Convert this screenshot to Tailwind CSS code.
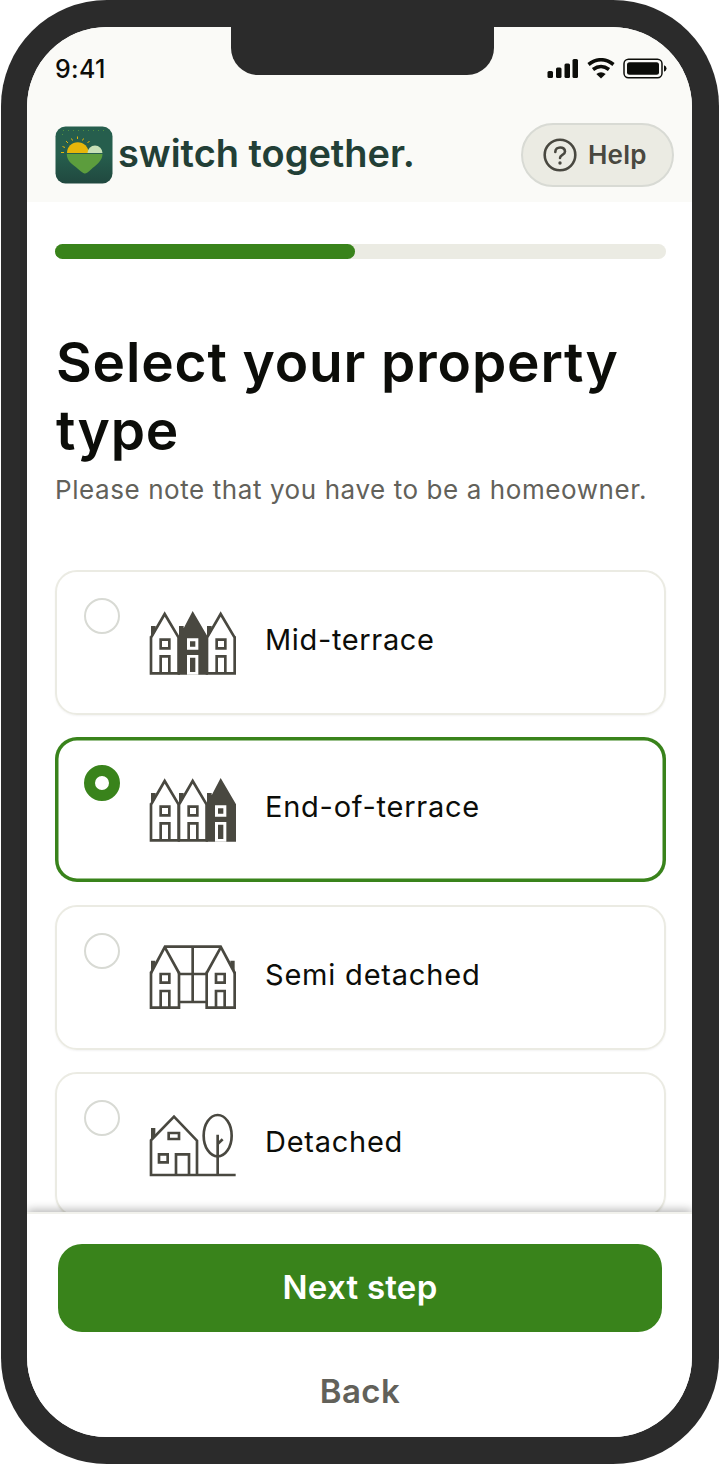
<!DOCTYPE html>
<html lang="en" class="bg-white">

<head>
    <meta charset="utf-8" />
    <script src="https://cdn.jsdelivr.net/npm/@tailwindcss/browser@4"></script>
    <title>Switch Together - Property type</title>
</head>

<body class="w-[720px] h-[1465px] overflow-hidden font-['Inter',sans-serif] text-[#0c0d09]">
    <!-- Shared icon shapes -->
    <svg class="hidden">
        <defs>
            <g id="house" fill="none" stroke="#494840" stroke-width="8">
                <path d="M33 113L74 42L116 113M33 109V220H116V109" />
                <path d="M62 119H88V145H62zM62 220V169H88V220" />
                <path d="M33 78H47V94L33 116z" fill="#494840" stroke="none" />
            </g>
            <g id="house-solid">
                <path d="M29 112L33 110V78H47V85L74 33L120 112V224H29z" fill="#494840" />
                <path d="M57 115H91V149H57zM57 165H91V224H57z" fill="#fff" />
                <path d="M66 124H82V140H66zM66 173H82V216H66z" fill="#494840" />
            </g>
        </defs>
    </svg>

    <div class="w-[718px] h-[1464px] ml-px pl-[26px] pr-[27px] pt-[26.5px] pb-[27px] bg-[#2b2b2b] rounded-[106px]">
        <div class="relative h-full flex flex-col rounded-[80px] overflow-hidden bg-white">
            <!-- Notch -->
            <div class="absolute left-[204px] -top-px w-[262.5px] h-[49.5px] bg-[#2b2b2b] rounded-b-[27px]"></div>

            <!-- Header -->
            <header class="h-[175px] shrink-0 bg-[#fafaf7] pl-7 pr-[18px]">
                <div class="flex justify-between items-center h-[85px] pr-[7px]">
                    <span class="text-[25px] font-medium leading-none tracking-[0.3px]">9:41</span>
                    <svg class="w-[120px] h-[22px]" viewBox="0 0 120 22" fill="#0c0d09">
                        <rect x="0.5" y="13" width="5.5" height="7" rx="1.5" />
                        <rect x="9" y="9.5" width="5.5" height="10.5" rx="1.5" />
                        <rect x="17.5" y="5.5" width="5.5" height="14.5" rx="1.5" />
                        <rect x="25.5" y="1" width="5.5" height="19" rx="1.5" />
                        <path d="M41.5 6.5Q54 -3 66.5 6.5M46 11.5Q54 5.5 62 11.5" fill="none" stroke="#0c0d09" stroke-width="3.6" />
                        <path d="M49.3 16Q54 12.4 58.7 16L54 20.5z" />
                        <rect x="77" y="1.2" width="38" height="18.5" rx="4.5" fill="none" stroke="#0c0d09" stroke-width="1.5" />
                        <rect x="80" y="4.2" width="32" height="12.5" rx="2.5" />
                        <path d="M117 7.2Q119.5 8.2 119.5 10.5Q119.5 12.7 117 13.7z" />
                    </svg>
                </div>
                <div class="flex justify-between items-center h-[86px]">
                    <div class="flex items-center gap-[5px]">
                        <svg class="w-[58px] h-[58px]" viewBox="0 0 58 58">
                            <defs>
                                <linearGradient id="logoBg" x1="0" y1="0" x2="0" y2="1">
                                    <stop offset="0.5" stop-color="#265e4d" />
                                    <stop offset="1" stop-color="#20483f" />
                                </linearGradient>
                            </defs>
                            <rect x="0.5" y="0.5" width="57" height="57" rx="10" fill="url(#logoBg)" />
                            <path d="M8 4.5H50M7 8.5H9" stroke="#5c9d3d" stroke-width="0.8" stroke-dasharray="1 4" />
                            <path d="M12 27A10.8 10.8 0 0 1 33.6 27z" fill="#e6b60a" />
                            <path d="M6 26.5H9M7.5 20.5L10 21.5M11 15L13 17M16.5 12.5L17.5 14.5M22.5 10.5V13M28.5 12.5L27.5 14.5M34.5 15L32.5 17" stroke="#e6b60a" stroke-width="1" />
                            <path d="M32.5 27A7.5 7.5 0 0 1 47.5 27z" fill="#c7e0b6" />
                            <path d="M11.8 28H47.5C47.5 35 41 39 36 43.5Q31.5 48 29.5 47.5Q27.5 47 22.5 42.5C17 38 11.8 35 11.8 28z" fill="#5c9d3d" />
                        </svg>
                        <span class="text-[38px] font-semibold leading-none tracking-[-0.03px] text-[#223f36] -mt-1">switch together.</span>
                    </div>
                    <button class="flex items-center gap-[11px] w-[153px] h-16 pl-5 bg-[#ebebe3] border-2 border-[#d8dad4] rounded-full text-[#494840]">
                        <svg class="w-[34px] h-[34px]" viewBox="0 0 34 34" fill="none" stroke="#494840" stroke-width="2.6" stroke-linecap="round">
                            <circle cx="17" cy="17" r="15.3" />
                            <path d="M12.3 14C12.3 8 22 8 22 13.5C22 17.3 17 16.5 17 20" />
                            <circle cx="17" cy="25" r="1.7" fill="#494840" stroke="none" />
                        </svg>
                        <span class="text-[26px] font-semibold leading-none tracking-[0.2px]">Help</span>
                    </button>
                </div>
            </header>

            <!-- Property form -->
            <main class="flex-1 min-h-0 overflow-hidden pl-7 pr-[26px] pt-[42px]">
                <div class="h-[15px] rounded-full bg-[#ebebe3]">
                    <div class="h-full w-[300px] rounded-full bg-[#39831b]"></div>
                </div>
                <h1 class="mt-[69px] pl-px text-[55px] leading-[68px] font-semibold tracking-[0.85px] whitespace-nowrap">Select your property<br />type</h1>
                <p class="mt-[8px] text-[26px] leading-[36px] tracking-[0.58px] text-[#62615a] whitespace-nowrap">Please note that you have to be a homeowner.</p>

                <div class="mt-[62.5px] flex flex-col gap-[22.4px]">
                    <label class="flex h-[145px] shrink-0 border-2 border-[#ebebe3] rounded-[22px] shadow-xs">
                        <span class="ml-[27px] mt-[26px] size-9 rounded-full border-2 border-[#d8dad4]"></span>
                        <svg class="ml-[29px] mt-[38px] w-[88px] h-[66px]" viewBox="27 30 264 198">
                            <use href="#house" />
                            <use href="#house" x="168" />
                            <use href="#house-solid" x="84" />
                        </svg>
                        <span class="ml-[28px] mt-[48px] text-[29px] leading-[40px] tracking-[0.65px]">Mid-terrace</span>
                    </label>
                    <label class="flex h-[145px] shrink-0 rounded-[22px] shadow-[inset_0_0_0_3.5px_#39831b]">
                        <span class="ml-[29px] mt-[28px] size-9 rounded-full border-[11px] border-[#39831b]"></span>
                        <svg class="ml-[29px] mt-[40px] w-[88px] h-[66px]" viewBox="27 30 264 198">
                            <use href="#house" />
                            <use href="#house" x="84" />
                            <use href="#house-solid" x="168" />
                        </svg>
                        <span class="ml-[28px] mt-[50px] text-[29px] leading-[40px] tracking-[0.75px]">End-of-terrace</span>
                    </label>
                    <label class="flex h-[145px] shrink-0 border-2 border-[#ebebe3] rounded-[22px] shadow-xs">
                        <span class="ml-[27px] mt-[26px] size-9 rounded-full border-2 border-[#d8dad4]"></span>
                        <svg class="ml-[29px] mt-[38px] w-[88px] h-[66px]" viewBox="27 30 264 198" fill="none" stroke="#494840" stroke-width="8">
                            <path d="M33 114L75 35H242L284 114M75 38L117 114M242 38L200 114" />
                            <path d="M33 110V218H117V110M200 110V218H284V110M158 35V201M117 117H200M117 201H200" />
                            <path d="M62 117H88V143H62zM62 218V168H88V218M228 117H254V143H228zM228 218V168H254V218" />
                            <path d="M33 77H46V92L33 113zM284 77H271V92L284 113z" fill="#494840" stroke="none" />
                        </svg>
                        <span class="ml-[28px] mt-[48px] text-[29px] leading-[40px] tracking-[0.8px]">Semi detached</span>
                    </label>
                    <label class="flex h-[145px] shrink-0 border-2 border-[#ebebe3] rounded-[22px] shadow-xs">
                        <span class="ml-[27px] mt-[26px] size-9 rounded-full border-2 border-[#d8dad4]"></span>
                        <svg class="ml-[29px] mt-[38px] w-[88px] h-[66px]" viewBox="27 30 264 198" fill="none" stroke="#494840" stroke-width="8">
                            <path d="M29 219H287M33 219V115L102 44L171 116V219" />
                            <path d="M86 93H117V111H86zM57 157H83V181H57zM108 219V157H147V219" />
                            <path d="M33 78H46V100L33 113z" fill="#494840" stroke="none" />
                            <ellipse cx="233" cy="101" rx="42" ry="62" />
                            <path d="M233 98V219M233 126L248 112" />
                        </svg>
                        <span class="ml-[28px] mt-[48px] text-[29px] leading-[40px] tracking-[0.75px]">Detached</span>
                    </label>
                </div>
            </main>

            <!-- Actions -->
            <footer class="relative h-[225px] shrink-0 bg-white border-t-2 border-[#f1f1ec] pl-[31px] pr-[30px] pt-[30px] shadow-[0_-2px_9px_rgba(0,0,0,0.3)]">
                <button class="block w-full h-22 pb-px rounded-[24px] bg-[#39831b] text-white text-[33px] leading-none font-semibold tracking-[0.25px]">Next step</button>
                <button class="block w-full h-[60px] mt-[29px] text-[#62615a] text-[33px] leading-none font-semibold tracking-[0.4px]">Back</button>
            </footer>
        </div>
    </div>
</body>

</html>
